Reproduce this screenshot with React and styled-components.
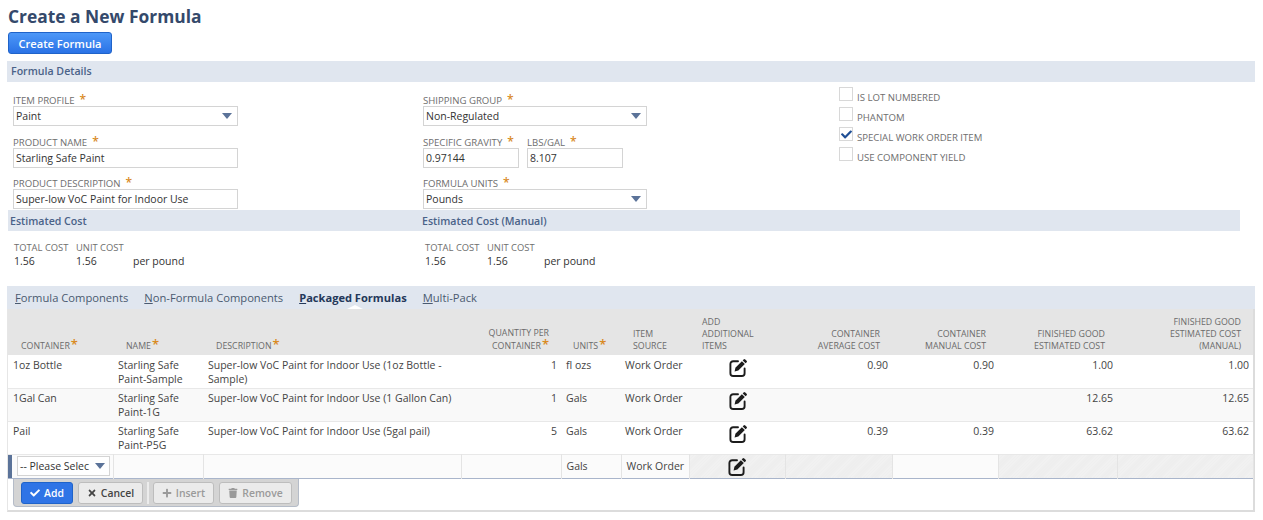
import React from "react";
import styled, { createGlobalStyle } from "styled-components";
import { FaCheck, FaPlus, FaTimes, FaTrash } from "react-icons/fa";

const GlobalStyle = createGlobalStyle`
  html, body {
    margin: 0;
    padding: 0;
    background: #fff;
  }
  body {
    font-family: "Open Sans", "Liberation Sans", sans-serif;
    font-size: 10.5px;
    color: #444;
  }
`;

const Page = styled.div`
  width: 1263px;
  height: 520px;
  overflow: hidden;
  padding: 5px 8px 0 8px;
  box-sizing: border-box;
`;

const PageTitle = styled.h1`
  margin: 0;
  height: 22px;
  line-height: 22px;
  font-size: 17.4px;
  font-weight: 700;
  color: #34496b;
`;

const CreateButton = styled.button`
  display: block;
  margin: 5px 0 7px 0;
  width: 104px;
  height: 22px;
  padding: 0;
  border: 1px solid #1f63c9;
  border-radius: 3px;
  background: linear-gradient(#4d98f8, #2a72e6);
  color: #fff;
  font-family: inherit;
  font-size: 11.1px;
  font-weight: 600;
`;

const SectionBar = styled.div`
  height: 21px;
  line-height: 21px;
  margin-left: -1px;
  padding-left: 4px;
  background: #e0e6ef;
  color: #4a6288;
  font-size: 10.6px;
  font-weight: 600;
`;

const DetailsGrid = styled.div`
  display: grid;
  grid-template-columns: 410px 416px 1fr;
  margin-left: 5px;
  height: 128px;
  box-sizing: border-box;
`;

const FieldColumn = styled.div`
  display: flex;
  flex-direction: column;
  padding-top: 10px;
  & > *:nth-child(1) {
    margin-bottom: 8px;
  }
  & > *:nth-child(2) {
    margin-bottom: 7px;
  }
`;

const FieldRow = styled.div`
  display: flex;
  gap: 8px;
`;

const FieldLabel = styled.div`
  height: 14px;
  line-height: 16px;
  font-size: 9.6px;
  color: #6e6e6e;
  white-space: nowrap;
`;

const Star = styled.span`
  color: #d98a1f;
  font-size: 12px;
  font-weight: 600;
  margin-left: 5px;
`;

const InputBox = styled.div`
  position: relative;
  width: ${(p) => p.$width}px;
  height: 20px;
  line-height: 18px;
  box-sizing: border-box;
  border: 1px solid #d4d4d4;
  padding-left: 2px;
  font-size: 10.5px;
  color: #333;
  background: #fff;
  white-space: nowrap;
  overflow: hidden;
`;

const Caret = styled.span`
  position: absolute;
  right: ${(p) => p.$right ?? 5}px;
  top: 6px;
  width: 0;
  height: 0;
  border-left: 5px solid transparent;
  border-right: 5px solid transparent;
  border-top: 6px solid #5b7399;
`;

const CheckColumn = styled.div`
  display: flex;
  flex-direction: column;
  gap: 6px;
  padding-top: 5px;
`;

const CheckRow = styled.div`
  display: flex;
  align-items: flex-start;
  gap: 4px;
  height: 14px;
`;

const CheckText = styled.span`
  margin-top: 4px;
  line-height: 14px;
  font-size: 9.6px;
  color: #6e6e6e;
  white-space: nowrap;
`;

const CheckBox = styled.span`
  display: flex;
  align-items: center;
  justify-content: center;
  width: 14px;
  height: 14px;
  box-sizing: border-box;
  border: 1px solid #d8d8d8;
  color: #1f4f96;
  font-size: 11px;
`;

const CostBar = styled.div`
  display: grid;
  grid-template-columns: 412px 1fr;
  width: 1232px;
  height: 21px;
  line-height: 22px;
  padding-left: 2px;
  box-sizing: border-box;
  background: #e0e6ef;
  color: #4a6288;
  font-size: 10.6px;
  font-weight: 600;
`;

const CostGrid = styled.div`
  display: grid;
  grid-template-columns: 411px 1fr;
  height: 55px;
  margin-left: 6px;
  padding-top: 9px;
  box-sizing: border-box;
`;

const CostBlock = styled.div`
  display: grid;
  grid-template-columns: 62px 57px 60px;
  align-content: start;
`;

const CostLabel = styled.div`
  height: 14px;
  line-height: 16px;
  font-size: 9.4px;
  color: #6e6e6e;
`;

const CostValue = styled.div`
  height: 14px;
  line-height: 14px;
  font-size: 10.5px;
  color: #333;
`;

const TabBar = styled.div`
  position: relative;
  display: flex;
  height: 23px;
  line-height: 23px;
  margin-left: -1px;
  padding-left: 8px;
  background: #e0e6ef;
  font-size: 11.2px;
`;

const Tab = styled.span`
  margin-right: 16px;
  font-size: ${(p) => (p.$active ? "11.1px" : "inherit")};
  font-weight: ${(p) => (p.$active ? 700 : 400)};
  color: ${(p) => (p.$active ? "#24385a" : "#4a5a70")};
  white-space: nowrap;
  &::first-letter {
    text-decoration: underline;
  }
`;

const TabNotch = styled.span`
  position: absolute;
  left: 340px;
  bottom: 0;
  width: 0;
  height: 0;
  border-left: 8px solid transparent;
  border-right: 8px solid transparent;
  border-bottom: 4px solid #fff;
`;

const Panel = styled.div`
  height: 203px;
  margin-left: -1px;
  box-sizing: border-box;
  border-right: 2px solid #dcdcdc;
  border-left: 1px solid #e6e6e6;
  border-bottom: 2px solid #dcdcdc;
`;

const Table = styled.table`
  width: 1245px;
  table-layout: fixed;
  border-collapse: collapse;
`;

const Head = styled.th`
  height: 46px;
  padding: 0 ${(p) => p.$padRight ?? 4}px 3px ${(p) => p.$padLeft ?? 4}px;
  box-sizing: border-box;
  background: #e5e5e5;
  font-size: 8.8px;
  line-height: 12px;
  font-weight: 400;
  color: #6b6b6b;
  vertical-align: bottom;
  text-align: ${(p) => p.$align || "left"};
`;

const HeadStar = styled.span`
  color: #d98a1f;
  font-size: 13px;
  font-weight: 600;
  line-height: 10px;
  margin-left: 1px;
`;

const Row = styled.tr`
  background: ${(p) => (p.$alt ? "#f9f9f9" : "#fff")};
  border-bottom: 1px solid #e8e8e8;
  &:first-child td {
    padding-top: 3px;
  }
`;

const Cell = styled.td`
  height: 33px;
  padding: 2px 4px 0 ${(p) => p.$padLeft ?? 5}px;
  box-sizing: border-box;
  vertical-align: top;
  font-size: 10.5px;
  line-height: 14px;
  color: #444;
  text-align: ${(p) => p.$align || "left"};
`;

const IconWrap = styled.div`
  display: flex;
  justify-content: center;
  color: #1c1c1c;
`;

const EditRow = styled.tr`
  border-top: 1px solid #a9b5cb;
  border-bottom: 1px solid #a9b5cb;
`;

const EditCell = styled.td`
  height: 24px;
  padding: 0 0 0 ${(p) => p.$padLeft ?? 5}px;
  box-sizing: border-box;
  font-size: 10.5px;
  color: #444;
  border-right: 1px solid #e4e4e4;
  box-shadow: ${(p) => (p.$marker ? "inset 4px 0 #5b7399" : "none")};
  background: ${(p) =>
    p.$hatched
      ? "repeating-linear-gradient(135deg, #f2f2f2 0 1px, #ececec 1px 2px)"
      : "#fbfbfb"};
`;

const ButtonTray = styled.div`
  display: flex;
  align-items: center;
  gap: 5px;
  width: 286px;
  height: 28px;
  margin-left: 5px;
  padding: 2px 0 0 7px;
  box-sizing: border-box;
  background: #d4d4d4;
  border: 1px solid #b5bcc8;
  border-top: none;
  border-radius: 0 0 4px 4px;
`;

const TrayButton = styled.button`
  display: flex;
  align-items: center;
  justify-content: center;
  gap: 4px;
  width: ${(p) => p.$width}px;
  height: 22px;
  padding: 0;
  box-sizing: border-box;
  border: 1px solid ${(p) => (p.$primary ? "#1f63c9" : "#bdbdbd")};
  border-radius: 3px;
  background: ${(p) => (p.$primary ? "#2f74e6" : "#ebebeb")};
  color: ${(p) => (p.$primary ? "#fff" : p.$muted ? "#9a9a9a" : "#444")};
  font-family: inherit;
  font-size: 10.4px;
  font-weight: 600;
  svg {
    font-size: 10px;
  }
`;

const TrayDivider = styled.span`
  width: 2px;
  height: 22px;
  margin: 0 -1px;
  background: #ececec;
`;

const columns = [105, 90, 258, 100, 60, 68, 96, 107, 106, 119, 136];

const rows = [
  {
    container: "1oz Bottle",
    name: "Starling Safe Paint-Sample",
    description: "Super-low VoC Paint for Indoor Use (1oz Bottle - Sample)",
    qty: "1",
    units: "fl ozs",
    avg: "0.90",
    manual: "0.90",
    est: "1.00",
    estManual: "1.00",
  },
  {
    container: "1Gal Can",
    name: "Starling Safe Paint-1G",
    description: "Super-low VoC Paint for Indoor Use (1 Gallon Can)",
    qty: "1",
    units: "Gals",
    avg: "",
    manual: "",
    est: "12.65",
    estManual: "12.65",
  },
  {
    container: "Pail",
    name: "Starling Safe Paint-P5G",
    description: "Super-low VoC Paint for Indoor Use (5gal pail)",
    qty: "5",
    units: "Gals",
    avg: "0.39",
    manual: "0.39",
    est: "63.62",
    estManual: "63.62",
  },
];

const EditIcon = () => (
  <svg width="18" height="19" viewBox="0 0 18 19">
    <path
      d="M9 3.2H4.2a2.8 2.8 0 0 0-2.8 2.8v9.2a2.8 2.8 0 0 0 2.8 2.8h8.6a2.8 2.8 0 0 0 2.8-2.8V10.5"
      fill="none"
      stroke="currentColor"
      strokeWidth="1.9"
      strokeLinecap="round"
    />
    <path d="M5.6 13.4l.8-3.7 6.5-6.5 2.9 2.9-6.5 6.5z" fill="currentColor" />
    <path d="M13.7 2.4l1-1a1.1 1.1 0 0 1 1.5 0l1.4 1.4a1.1 1.1 0 0 1 0 1.5l-1 1z" fill="currentColor" />
  </svg>
);

const SelectField = ({ label, value, width }) => (
  <div>
    <FieldLabel>
      {label}
      <Star>*</Star>
    </FieldLabel>
    <InputBox $width={width}>
      {value}
      <Caret />
    </InputBox>
  </div>
);

const TextField = ({ label, value, width }) => (
  <div>
    <FieldLabel>
      {label}
      <Star>*</Star>
    </FieldLabel>
    <InputBox $width={width}>{value}</InputBox>
  </div>
);

const Cost = ({ unit }) => (
  <CostBlock>
    <CostLabel>TOTAL COST</CostLabel>
    <CostLabel>UNIT COST</CostLabel>
    <CostLabel />
    <CostValue>1.56</CostValue>
    <CostValue>1.56</CostValue>
    <CostValue>{unit}</CostValue>
  </CostBlock>
);

const App = () => {
  return (
    <Page>
      <GlobalStyle />
      <PageTitle>Create a New Formula</PageTitle>
      <CreateButton>Create Formula</CreateButton>
      <SectionBar>Formula Details</SectionBar>

      <DetailsGrid>
        <FieldColumn>
          <SelectField label="ITEM PROFILE" value="Paint" width={225} />
          <TextField label="PRODUCT NAME" value="Starling Safe Paint" width={225} />
          <TextField
            label="PRODUCT DESCRIPTION"
            value="Super-low VoC Paint for Indoor Use"
            width={225}
          />
        </FieldColumn>
        <FieldColumn>
          <SelectField label="SHIPPING GROUP" value="Non-Regulated" width={224} />
          <FieldRow>
            <TextField label="SPECIFIC GRAVITY" value="0.97144" width={96} />
            <TextField label="LBS/GAL" value="8.107" width={96} />
          </FieldRow>
          <SelectField label="FORMULA UNITS" value="Pounds" width={224} />
        </FieldColumn>
        <CheckColumn>
          <CheckRow>
            <CheckBox />
            <CheckText>IS LOT NUMBERED</CheckText>
          </CheckRow>
          <CheckRow>
            <CheckBox />
            <CheckText>PHANTOM</CheckText>
          </CheckRow>
          <CheckRow>
            <CheckBox>
              <FaCheck />
            </CheckBox>
            <CheckText>SPECIAL WORK ORDER ITEM</CheckText>
          </CheckRow>
          <CheckRow>
            <CheckBox />
            <CheckText>USE COMPONENT YIELD</CheckText>
          </CheckRow>
        </CheckColumn>
      </DetailsGrid>

      <CostBar>
        <span>Estimated Cost</span>
        <span>Estimated Cost (Manual)</span>
      </CostBar>
      <CostGrid>
        <Cost unit="per pound" />
        <Cost unit="per pound" />
      </CostGrid>

      <TabBar>
        <Tab>Formula Components</Tab>
        <Tab>Non-Formula Components</Tab>
        <Tab $active>Packaged Formulas</Tab>
        <Tab>Multi-Pack</Tab>
        <TabNotch />
      </TabBar>

      <Panel>
        <Table>
          <colgroup>
            {columns.map((w, i) => (
              <col key={i} style={{ width: w }} />
            ))}
          </colgroup>
          <thead>
            <tr>
              <Head $padLeft={13}>
                CONTAINER<HeadStar>*</HeadStar>
              </Head>
              <Head $padLeft={13}>
                NAME<HeadStar>*</HeadStar>
              </Head>
              <Head $padLeft={13}>
                DESCRIPTION<HeadStar>*</HeadStar>
              </Head>
              <Head $align="right" $padRight={12}>
                QUANTITY PER
                <br />
                CONTAINER<HeadStar>*</HeadStar>
              </Head>
              <Head $padLeft={12}>
                UNITS<HeadStar>*</HeadStar>
              </Head>
              <Head $padLeft={12}>
                ITEM
                <br />
                SOURCE
              </Head>
              <Head $padLeft={13}>
                ADD
                <br />
                ADDITIONAL
                <br />
                ITEMS
              </Head>
              <Head $align="right" $padRight={12}>
                CONTAINER
                <br />
                AVERAGE COST
              </Head>
              <Head $align="right" $padRight={12}>
                CONTAINER
                <br />
                MANUAL COST
              </Head>
              <Head $align="right" $padRight={12}>
                FINISHED GOOD
                <br />
                ESTIMATED COST
              </Head>
              <Head $align="right" $padRight={12}>
                FINISHED GOOD
                <br />
                ESTIMATED COST
                <br />
                (MANUAL)
              </Head>
            </tr>
          </thead>
          <tbody>
            {rows.map((r, i) => (
              <Row key={r.container} $alt={i === 1}>
                <Cell>{r.container}</Cell>
                <Cell>{r.name}</Cell>
                <Cell>{r.description}</Cell>
                <Cell $align="right">{r.qty}</Cell>
                <Cell>{r.units}</Cell>
                <Cell $padLeft={4}>Work Order</Cell>
                <Cell>
                  <IconWrap>
                    <EditIcon />
                  </IconWrap>
                </Cell>
                <Cell $align="right">{r.avg}</Cell>
                <Cell $align="right">{r.manual}</Cell>
                <Cell $align="right">{r.est}</Cell>
                <Cell $align="right">{r.estManual}</Cell>
              </Row>
            ))}
            <EditRow>
              <EditCell $marker $padLeft={9}>
                <InputBox $width={93}>
                  -- Please Selec
                  <Caret $right={4} />
                </InputBox>
              </EditCell>
              <EditCell />
              <EditCell />
              <EditCell />
              <EditCell>Gals</EditCell>
              <EditCell>Work Order</EditCell>
              <EditCell $hatched $padLeft={0}>
                <IconWrap>
                  <EditIcon />
                </IconWrap>
              </EditCell>
              <EditCell $hatched />
              <EditCell />
              <EditCell $hatched />
              <EditCell $hatched />
            </EditRow>
          </tbody>
        </Table>
        <ButtonTray>
          <TrayButton $primary $width={52}>
            <FaCheck />
            Add
          </TrayButton>
          <TrayButton $width={65}>
            <FaTimes />
            Cancel
          </TrayButton>
          <TrayDivider />
          <TrayButton $muted $width={61}>
            <FaPlus />
            Insert
          </TrayButton>
          <TrayButton $muted $width={73}>
            <FaTrash />
            Remove
          </TrayButton>
        </ButtonTray>
      </Panel>
    </Page>
  );
};

export default App;
